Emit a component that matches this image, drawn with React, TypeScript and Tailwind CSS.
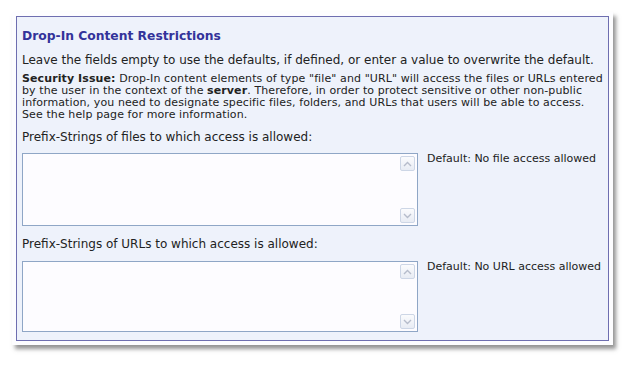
import React from "react";

function ScrollBtn({ down }: { down?: boolean }) {
  return (
    <div className="w-[15px] h-[15px] rounded-[2px] border border-[#cdd6e6] bg-gradient-to-b from-[#fbfbfd] to-[#e8ecf4] flex items-center justify-center">
      <svg width="9" height="6" viewBox="0 0 9 6">
        <path
          d={down ? "M1 1 L4.5 4.5 L8 1" : "M1 5 L4.5 1.5 L8 5"}
          fill="none"
          stroke="#b6bccb"
          strokeWidth="1.4"
        />
      </svg>
    </div>
  );
}

function Field({ h, def }: { h: string; def: string }) {
  return (
    <div className="flex items-start">
      <div className={`w-[396px] ${h} border border-[#8fa6c6] bg-[#fdfcff] flex justify-end p-[2px]`}>
        <div className="flex flex-col justify-between">
          <ScrollBtn />
          <ScrollBtn down />
        </div>
      </div>
      <div className="ml-[9px] mt-[-1px] text-[11px] leading-[14px] text-[#222]">{def}</div>
    </div>
  );
}

export default function App() {
  return (
    <div className="w-[630px] h-[379px] bg-white pt-[12px] pl-[12px]" style={{ fontFamily: '"DejaVu Sans", Verdana, sans-serif' }}>
      <div className="w-[601px] bg-[#fdfdff] p-[4px] shadow-[3px_4px_4px_rgba(60,60,60,0.55)]">
        <div className="border border-[#6e6eb0] bg-[#eef2fb] px-[5px] pt-[11px] pb-[8px]">
          <div className="text-[12.3px] leading-[17px] font-bold text-[#33339a]">Drop-In Content Restrictions</div>
          <div className="mt-[7px] text-[12px] leading-[16px] text-[#222]">
            Leave the fields empty to use the defaults, if defined, or enter a value to overwrite the default.
          </div>
          <div className="mt-[5px] text-[11px] leading-[12px] tracking-[0.1px] whitespace-nowrap text-[#222]">
            <b>Security Issue:</b> Drop-In content elements of type "file" and "URL" will access the files or URLs entered
            <br />
            by the user in the context of the <b>server</b>. Therefore, in order to protect sensitive or other non-public
            <br />
            information, you need to designate specific files, folders, and URLs that users will be able to access.
            <br />
            See the help page for more information.
          </div>
          <div className="mt-[8px] text-[12px] leading-[16px] text-[#222]">Prefix-Strings of files to which access is allowed:</div>
          <div className="mt-[8px]">
            <Field h="h-[73px]" def="Default: No file access allowed" />
          </div>
          <div className="mt-[10px] text-[12px] leading-[16px] text-[#222]">Prefix-Strings of URLs to which access is allowed:</div>
          <div className="mt-[9px]">
            <Field h="h-[71px]" def="Default: No URL access allowed" />
          </div>
        </div>
      </div>
    </div>
  );
}
